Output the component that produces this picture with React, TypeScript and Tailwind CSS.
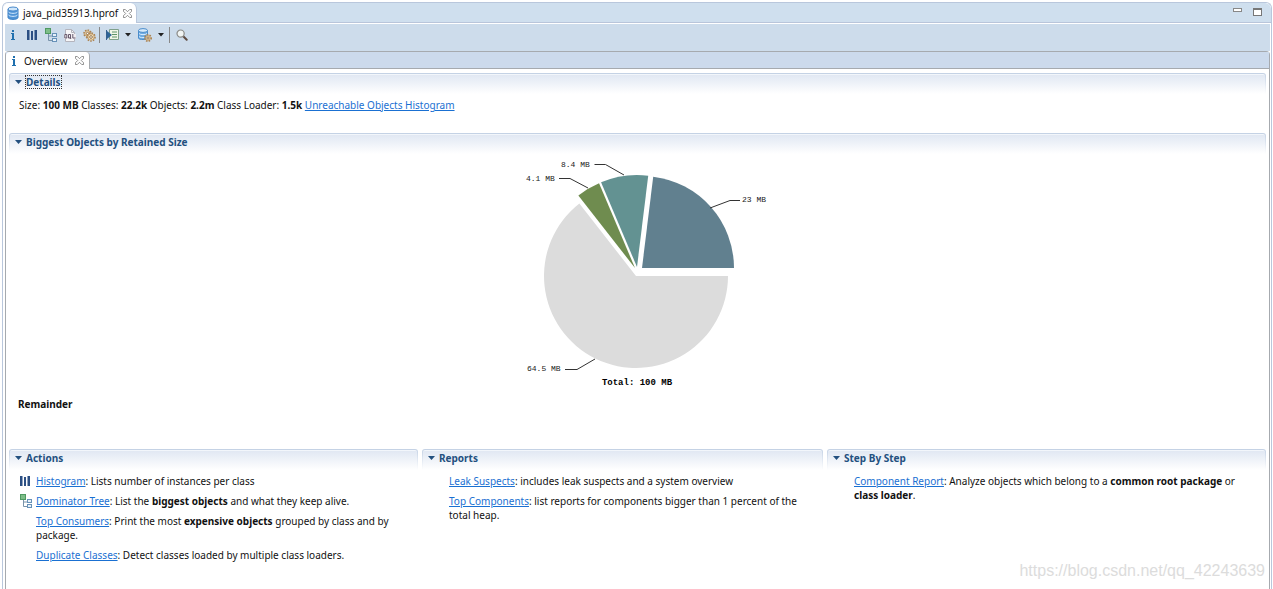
import type { ReactNode } from "react";

const RADIUS = 92;

type Slice = { cx: number; cy: number; from: number; to: number; fill: string };

const slices: Slice[] = [
  { cx: 128, cy: 124, from: 128, to: 360, fill: "#dcdcdc" },
  { cx: 134, cy: 116, from: 0, to: 83, fill: "#61808f" },
  { cx: 129, cy: 115, from: 83, to: 113, fill: "#639292" },
  { cx: 127, cy: 116, from: 113, to: 128, fill: "#6f8c4f" },
];

function slicePath({ cx, cy, from, to }: Slice) {
  const point = (deg: number) => {
    const a = (deg * Math.PI) / 180;
    return `${cx + RADIUS * Math.cos(a)} ${cy - RADIUS * Math.sin(a)}`;
  };
  return `M${cx} ${cy}L${point(from)}A${RADIUS} ${RADIUS} 0 ${to - from > 180 ? 1 : 0} 0 ${point(to)}Z`;
}

function RetainedSizeChart() {
  return (
    <svg
      width="260"
      height="240"
      viewBox="0 0 260 240"
      role="img"
      aria-label="Biggest objects by retained size"
      className="font-['Liberation_Mono',monospace] text-[8px]"
    >
      {slices.map((s) => (
        <path key={s.fill} d={slicePath(s)} fill={s.fill} />
      ))}
      <g fill="none" stroke="#333" strokeWidth="1">
        <path d="M86.500 12.500H97.500L116 23" />
        <path d="M51 26.500H62L80 36" />
        <path d="M202 56L222 48.500H232" />
        <path d="M57 217.500H69L87 207" />
      </g>
      <g fill="#222">
        <text x="53" y="15">8.4 MB</text>
        <text x="18" y="29">4.1 MB</text>
        <text x="234" y="50">23 MB</text>
        <text x="19" y="219">64.5 MB</text>
      </g>
      <text x="129" y="233" textAnchor="middle" fontWeight="bold" fill="#000" className="text-[9px]">
        Total: 100 MB
      </text>
    </svg>
  );
}

function DatabaseIcon() {
  return (
    <svg width="12" height="14" viewBox="0 0 12 14" aria-hidden="true">
      <path d="M1 3v8.500c0 2.500 10 2.500 10 0V3z" fill="#4f93d6" stroke="#3b7fc4" />
      <ellipse cx="6" cy="3" rx="5" ry="2" fill="#cfe6fa" stroke="#4a8acb" />
      <path d="M1.500 6c1 1.800 8 1.800 9 0M1.500 9c1 1.800 8 1.800 9 0" fill="none" stroke="#d5eafc" />
    </svg>
  );
}

function CloseIcon() {
  return (
    <svg width="9" height="9" viewBox="0 0 10 10" aria-hidden="true">
      <path
        d="M.5 .5h2L5 3 7.500 .5h2v2L7 5l2.500 2.500v2h-2L5 7 2.500 9.500h-2v-2L3 5 .5 2.500z"
        fill="#fff"
        stroke="#777"
        strokeWidth=".9"
      />
    </svg>
  );
}

function InfoIcon() {
  return (
    <svg width="6" height="10" viewBox="0 0 6 10" aria-hidden="true">
      <path d="M2 0h2v2H2zM1 3h3v6h1v1H1V9h1V4H1z" fill="#2070ae" />
    </svg>
  );
}

function HistogramIcon() {
  return (
    <svg width="10" height="10" viewBox="0 0 10 10" aria-hidden="true">
      <path d="M0 0h2.500v10H0zM4 1h2v9H4zM7.500 0H10v10H7.500z" fill="#2b4f83" />
    </svg>
  );
}

function TreeIcon() {
  return (
    <svg width="13" height="14" viewBox="0 0 13 14" aria-hidden="true">
      <rect x=".5" y=".5" width="5" height="5" fill="#7dbd88" stroke="#4f9a62" />
      <path d="M3.500 6v6.500h4M3.500 8h4" fill="none" stroke="#7893aa" />
      <rect x="7.500" y="5.500" width="4" height="3" fill="#e7f1fa" stroke="#6791b8" />
      <rect x="7.500" y="10.500" width="4" height="3" fill="#e7f1fa" stroke="#6791b8" />
    </svg>
  );
}

function OqlIcon() {
  return (
    <svg width="12" height="13" viewBox="0 0 12 13" aria-hidden="true">
      <path d="M1.500 .5h6l3 3v9h-9z" fill="#f6f6f8" stroke="#b4b4bd" />
      <path d="M7.500 .5v3h3" fill="none" stroke="#b4b4bd" />
      <rect x="0" y="5" width="12" height="5" fill="#efecf0" />
      <path d="M.8 5.500h2v3.500h-2zM4.500 5.500h2v3.500h-2zM6 8.500l1 1.500M8.800 5v4H11.500" fill="none" stroke="#5a4d60" strokeWidth=".9" />
    </svg>
  );
}

function GearShape({ cx, cy, r }: { cx: number; cy: number; r: number }) {
  return (
    <>
      <circle cx={cx} cy={cy} r={r} fill="none" stroke="#ab8250" strokeWidth="1.600" strokeDasharray="1.500 1.200" />
      <circle cx={cx} cy={cy} r={r - 0.8} fill="#f3dfba" stroke="#b58a50" strokeWidth=".7" />
      <circle cx={cx} cy={cy} r={r / 3} fill="#fff" stroke="#7f5c32" strokeWidth=".8" />
    </>
  );
}

function GearsIcon() {
  return (
    <svg width="13" height="13" viewBox="0 0 13 13" aria-hidden="true">
      <GearShape cx={4.5} cy={4.5} r={3.5} />
      <GearShape cx={8} cy={8} r={4} />
    </svg>
  );
}

function ReportIcon() {
  return (
    <svg width="13" height="12" viewBox="0 0 13 12" aria-hidden="true">
      <path d="M3.500 .5h9v10h-9z" fill="#f1f6e8" stroke="#7fa08a" />
      <path d="M6 3h5M6 5.500h5M6 8h5" stroke="#5f9468" />
      <path d="M.5 1v10" stroke="#34618f" />
      <path d="M1 2l5 4-5 4z" fill="#2d6496" />
    </svg>
  );
}

function QueryIcon() {
  return (
    <svg width="14" height="14" viewBox="0 0 14 14" aria-hidden="true">
      <path d="M.5 2.500v7.500c0 2 9 2 9 0v-7.500z" fill="#6eabe2" stroke="#4a8cca" />
      <ellipse cx="5" cy="2.500" rx="4.500" ry="1.900" fill="#d7eafa" stroke="#4a8cca" />
      <path d="M1 5.500c1 1.500 7 1.500 8 0M1 8.500c1 1.200 4 1.200 5 1" fill="none" stroke="#dceefd" />
      <GearShape cx={10} cy={10} r={3.2} />
    </svg>
  );
}

function SearchIcon() {
  return (
    <svg width="12" height="12" viewBox="0 0 12 12" aria-hidden="true">
      <path d="M7.500 7.500l3.200 3.200" stroke="#5f4d43" strokeWidth="2" strokeLinecap="round" />
      <circle cx="4.600" cy="4.600" r="3.600" fill="#f1f5f4" stroke="#8a8a86" strokeWidth="1.200" />
    </svg>
  );
}

function DownIcon() {
  return (
    <svg width="6" height="4" viewBox="0 0 6 4" aria-hidden="true">
      <path d="M0 0h6L3 3.500z" fill="currentColor" />
    </svg>
  );
}

function ToolButton({ label, className = "w-4", children }: { label: string; className?: string; children: ReactNode }) {
  return (
    <button type="button" aria-label={label} title={label} className={`flex h-4 items-center justify-center ${className}`}>
      {children}
    </button>
  );
}

function Section({ title, focused = false, children }: { title: string; focused?: boolean; children: ReactNode }) {
  return (
    <section className="min-w-0">
      <div className="rounded-t-[3px] bg-linear-to-b from-[#c3d1e4] to-white px-px pt-px">
        <h2 className="rounded-t-[2px] border-t border-[#f2f6fb] bg-linear-to-b from-[#e1e8f3] to-white px-1 text-[10px] leading-3 font-bold text-[#23507f]">
          <button type="button" aria-expanded="true" className="flex h-[19px] items-center gap-1 pb-[6px]">
            <span className="flex w-2 justify-center">
              <svg width="7" height="4" viewBox="0 0 7 4" aria-hidden="true">
                <path d="M0 0h7L3.500 4z" fill="#23507f" />
              </svg>
            </span>
            <span className={focused ? "leading-3 outline-1 outline-[#333] outline-dotted" : ""}>{title}</span>
          </button>
        </h2>
      </div>
      {children}
    </section>
  );
}

function Link({ children }: { children: ReactNode }) {
  return (
    <a href="#" className="text-[#1a70d2] underline">
      {children}
    </a>
  );
}

function Item({ icon, children }: { icon?: ReactNode; children: ReactNode }) {
  return (
    <li className="flex">
      <span className="flex h-[14px] w-4 shrink-0 items-center">{icon}</span>
      <p className="min-w-0">{children}</p>
    </li>
  );
}

export default function App() {
  return (
    <div className="relative flex min-h-screen flex-col overflow-hidden bg-white pt-[2px] pr-px pl-[2px] font-['Noto_Sans','Open_Sans',sans-serif] text-[10px] leading-[14px] text-[#111]">
      <div className="flex grow flex-col rounded-t-md border border-b-0 border-[#b9c7dc]">
        <header className="flex h-5 items-stretch justify-between rounded-t-md border-b border-[#b9c5da] bg-[#cfdfee]">
          <button
            type="button"
            className="-mb-px flex items-center gap-1 rounded-t-md border-r border-[#b9c7dc] bg-white pr-1 pl-1"
          >
            <DatabaseIcon />
            <span>java_pid35913.hprof</span>
            <span className="pl-px">
              <CloseIcon />
            </span>
          </button>
          <div className="flex items-center gap-2 pr-2">
            <button type="button" aria-label="Minimize" className="flex h-4 w-3 items-start justify-center pt-[3px]">
              <span className="h-1 w-[9px] border border-[#888] bg-white" />
            </button>
            <button type="button" aria-label="Maximize" className="flex h-4 w-3 items-start justify-center pt-[3px]">
              <span className="h-2 w-[9px] border border-t-2 border-[#777] bg-white" />
            </button>
          </div>
        </header>

        <div className="flex grow flex-col border-t border-r border-l-2 border-white">
          <nav aria-label="Heap tools" className="flex h-[27px] items-start bg-[#cddceb] pt-[3px] text-[#222]">
            <ToolButton label="Overview"><InfoIcon /></ToolButton>
            <span className="flex gap-[3px] pl-[3px]">
              <ToolButton label="Histogram"><HistogramIcon /></ToolButton>
              <ToolButton label="Dominator tree"><TreeIcon /></ToolButton>
              <ToolButton label="OQL"><OqlIcon /></ToolButton>
              <ToolButton label="Threads"><GearsIcon /></ToolButton>
            </span>
            <span className="mx-[2px] h-4 w-px bg-[#888]" />
            <ToolButton label="Run report" className="gap-[6px] px-1"><ReportIcon /><DownIcon /></ToolButton>
            <ToolButton label="Query browser" className="gap-[6px] px-[3px]"><QueryIcon /><DownIcon /></ToolButton>
            <span className="mx-[2px] h-4 w-px bg-[#888]" />
            <ToolButton label="Find object" className="w-5"><SearchIcon /></ToolButton>
          </nav>

          <div className="flex grow flex-col rounded-t border border-b-0 border-[#a6aaaf]">
            <div className="flex h-[17px] border-b border-[#a6aaaf] bg-[#ccdaec]">
              <button
                type="button"
                className="-mb-px flex items-center gap-[7px] rounded-t border-r border-[#a6aaaf] bg-white pr-[5px] pl-[5px]"
              >
                <InfoIcon />
                <span>Overview</span>
                <CloseIcon />
              </button>
            </div>

            <main className="flex flex-col px-[3px] pt-1">
              <Section title="Details" focused>
                <p className="px-[10px] pt-1 pb-[21px]">
                  Size: <b>100 MB</b> Classes: <b>22.2k</b> Objects: <b>2.2m</b> Class Loader: <b>1.5k</b>{" "}
                  <Link>Unreachable Objects Histogram</Link>
                </p>
              </Section>

              <Section title="Biggest Objects by Retained Size">
                <div className="-mt-[2px] flex justify-center">
                  <RetainedSizeChart />
                </div>
                <p className="px-[9px] pt-[5px] pb-[38px] font-bold">Remainder</p>
              </Section>

              <div className="grid grid-cols-[409fr_401fr_439fr] gap-1">
                <Section title="Actions">
                  <ul className="flex flex-col gap-[6px] pt-1 pr-2 pl-[11px]">
                    <Item icon={<HistogramIcon />}>
                      <Link>Histogram</Link>: Lists number of instances per class
                    </Item>
                    <Item icon={<TreeIcon />}>
                      <Link>Dominator Tree</Link>: List the <b>biggest objects</b> and what they keep alive.
                    </Item>
                    <Item>
                      <Link>Top Consumers</Link>: Print the most <b>expensive objects</b> grouped by class and by package.
                    </Item>
                    <Item>
                      <Link>Duplicate Classes</Link>: Detect classes loaded by multiple class loaders.
                    </Item>
                  </ul>
                </Section>
                <Section title="Reports">
                  <ul className="flex flex-col gap-[6px] pt-1 pr-2 pl-[11px]">
                    <Item>
                      <Link>Leak Suspects</Link>: includes leak suspects and a system overview
                    </Item>
                    <Item>
                      <Link>Top Components</Link>: list reports for components bigger than 1 percent of the total heap.
                    </Item>
                  </ul>
                </Section>
                <Section title="Step By Step">
                  <ul className="flex flex-col gap-[6px] pt-1 pr-2 pl-[11px]">
                    <Item>
                      <Link>Component Report</Link>: Analyze objects which belong to a <b>common root package</b> or{" "}
                      <b>class loader</b>.
                    </Item>
                  </ul>
                </Section>
              </div>
            </main>
          </div>
        </div>
      </div>
      <p className="absolute right-2 bottom-2 font-['Liberation_Sans',sans-serif] text-[16px] leading-5 text-[#dcdcdc]">
        https://blog.csdn.net/qq_42243639
      </p>
    </div>
  );
}
